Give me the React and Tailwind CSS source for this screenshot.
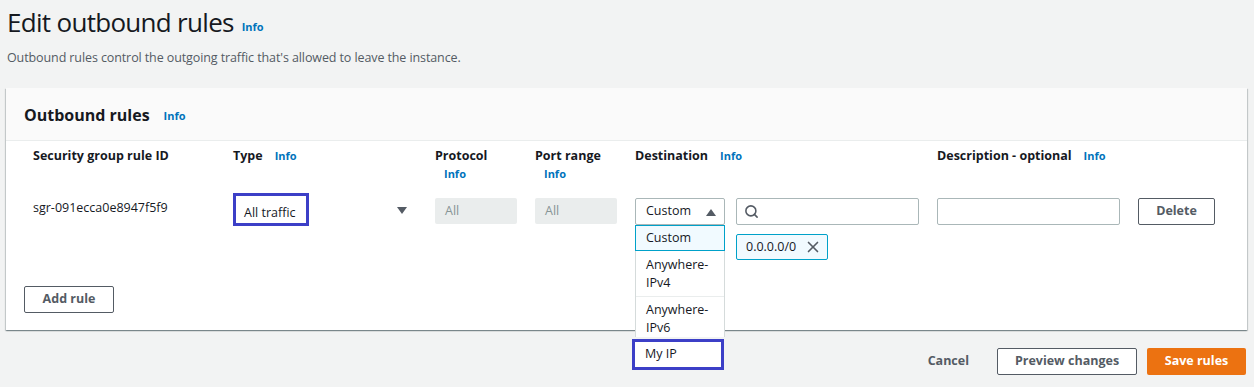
import { Search, X } from 'lucide-react';

function Info({ className = '' }) {
  return <span className={`text-[11px] leading-[14px] font-bold text-[#0073bb] ${className}`}>Info</span>;
}

function Caret({ up }) {
  return (
    <svg width="10" height="8" viewBox="0 0 10 8" className="fill-[#545b64]">
      {up ? <path d="M0 8 L5 1 L10 8 Z" /> : <path d="M0 0 L10 0 L5 7 Z" />}
    </svg>
  );
}

export default function App() {
  return (
    <div className="w-[1254px] h-[387px] bg-[#f2f3f3] text-[#16191f] overflow-hidden font-['Open_Sans','Liberation_Sans',sans-serif]">
      {/* ── Page header ── */}
      <div className="pl-[7px] pt-[4px]">
        <h1 className="flex items-end gap-[8px] text-[26px] leading-[36px] tracking-[-0.7px]">
          Edit outbound rules <Info className="mb-[6px] tracking-normal" />
        </h1>
        <p className="mt-[9px] text-[12.5px] tracking-[-0.1px] text-[#545b64] leading-[18px]">
          Outbound rules control the outgoing traffic that's allowed to leave the instance.
        </p>
      </div>

      {/* ── Panel ── */}
      <div className="relative mt-[21px] ml-[6px] w-[1241px] h-[242px] bg-white shadow-[0_1px_1px_0_rgba(0,28,36,0.3),1px_1px_1px_0_rgba(0,28,36,0.15),-1px_1px_1px_0_rgba(0,28,36,0.15)]">
        <div className="h-[53px] bg-[#fafafa] border-b border-[#eaeded] flex items-center pl-[18px] gap-[14px] pt-[1px]">
          <h2 className="text-[16px] font-bold leading-[20px]">Outbound rules</h2>
          <Info className="mt-[2px]" />
        </div>

        {/* column headers */}
        <div className="grid grid-cols-[200px_202px_100px_100px_302px_201px_1fr] items-start pl-[27px] pt-[6px] text-[12.5px] font-bold leading-[18px]">
          <div>Security group rule ID</div>
          <div className="flex items-center gap-[12px]">Type <Info /></div>
          <div>Protocol<Info className="block pl-[9px] mt-[2px]" /></div>
          <div>Port range<Info className="block pl-[9px] mt-[2px]" /></div>
          <div className="flex items-center gap-[12px]">Destination <Info /></div>
          <div className="flex items-center gap-[12px]">Description - optional <Info /></div>
          <div />
        </div>

        {/* rule row */}
        <div className="grid grid-cols-[200px_202px_100px_100px_302px_201px_1fr] pl-[27px] mt-[17px] text-[12.5px]">
          <div className="pt-[1px] leading-[18px]">sgr-091ecca0e8947f5f9</div>
          <div className="relative -mt-[5px] flex items-start">
            <div className="w-[76px] h-[33px] border-[3px] border-[#3c3fc7] pl-[8px] pt-[10px] leading-[14px]">All traffic</div>
            <div className="ml-[88px] mt-[14px]"><Caret /></div>
          </div>
          <div className="w-[82px] h-[26px] bg-[#eaeded] rounded-[2px] pl-[10px] leading-[26px] text-[#879596]">All</div>
          <div className="w-[82px] h-[26px] bg-[#eaeded] rounded-[2px] pl-[10px] leading-[26px] text-[#879596]">All</div>

          <div className="flex gap-[11px] items-start">
            <div className="relative">
              <div className="w-[90px] h-[27px] border border-[#aab7b8] rounded-[2px] flex items-center justify-between pl-[10px] pr-[8px]">
                <span>Custom</span>
                <Caret up />
              </div>
              {/* open dropdown */}
              <div className="absolute left-0 top-[27px] w-[90px] bg-white border-x border-[#d5dbdb] z-10 leading-[18px]">
                <div className="h-[26px] border border-[#00a1c9] bg-[#f1faff] -mx-px px-[10px] leading-[24px]">Custom</div>
                <div className="px-[10px] pt-[5px] pb-[4px] border-b border-[#eaeded]">Anywhere-<br />IPv4</div>
                <div className="px-[10px] pt-[4px] h-[40px]">Anywhere-<br />IPv6</div>
              </div>
              <div className="absolute -left-[3px] top-[141px] w-[92px] h-[31px] bg-white border-[3px] border-[#3c3fc7] z-20 pl-[10px] leading-[24px]">My IP</div>
            </div>
            <div>
              <div className="w-[183px] h-[27px] border border-[#aab7b8] rounded-[2px] flex items-center pl-[7px]">
                <Search size={15} strokeWidth={2.5} className="text-[#545b64]" />
              </div>
              <div className="mt-[9px] inline-flex items-center gap-[8px] h-[26px] border border-[#00a1c9] bg-[#f1faff] rounded-[2px] pl-[9px] pr-[5px]">
                <span>0.0.0.0/0</span>
                <X size={18} strokeWidth={2.2} className="text-[#545b64]" />
              </div>
            </div>
          </div>

          <div className="w-[183px] h-[27px] border border-[#aab7b8] rounded-[2px]" />
          <div>
            <button className="w-[77px] h-[27px] border border-[#545b64] rounded-[2px] text-[#545b64] font-bold text-[12.5px]">Delete</button>
          </div>
        </div>

        <div className="pl-[18px] mt-[25px]">
          <button className="w-[90px] h-[27px] border border-[#545b64] rounded-[2px] text-[#545b64] font-bold text-[12.5px]">Add rule</button>
        </div>
      </div>

      {/* ── Footer actions ── */}
      <div className="flex justify-end items-center pr-[8px] mt-[18px] gap-[10px] text-[12.5px] font-bold">
        <button className="text-[#545b64] px-[18px] h-[27px]">Cancel</button>
        <button className="w-[140px] h-[27px] border border-[#545b64] rounded-[2px] text-[#545b64] bg-white">Preview changes</button>
        <button className="w-[99px] h-[27px] rounded-[2px] bg-[#ec7211] text-white">Save rules</button>
      </div>
    </div>
  );
}
